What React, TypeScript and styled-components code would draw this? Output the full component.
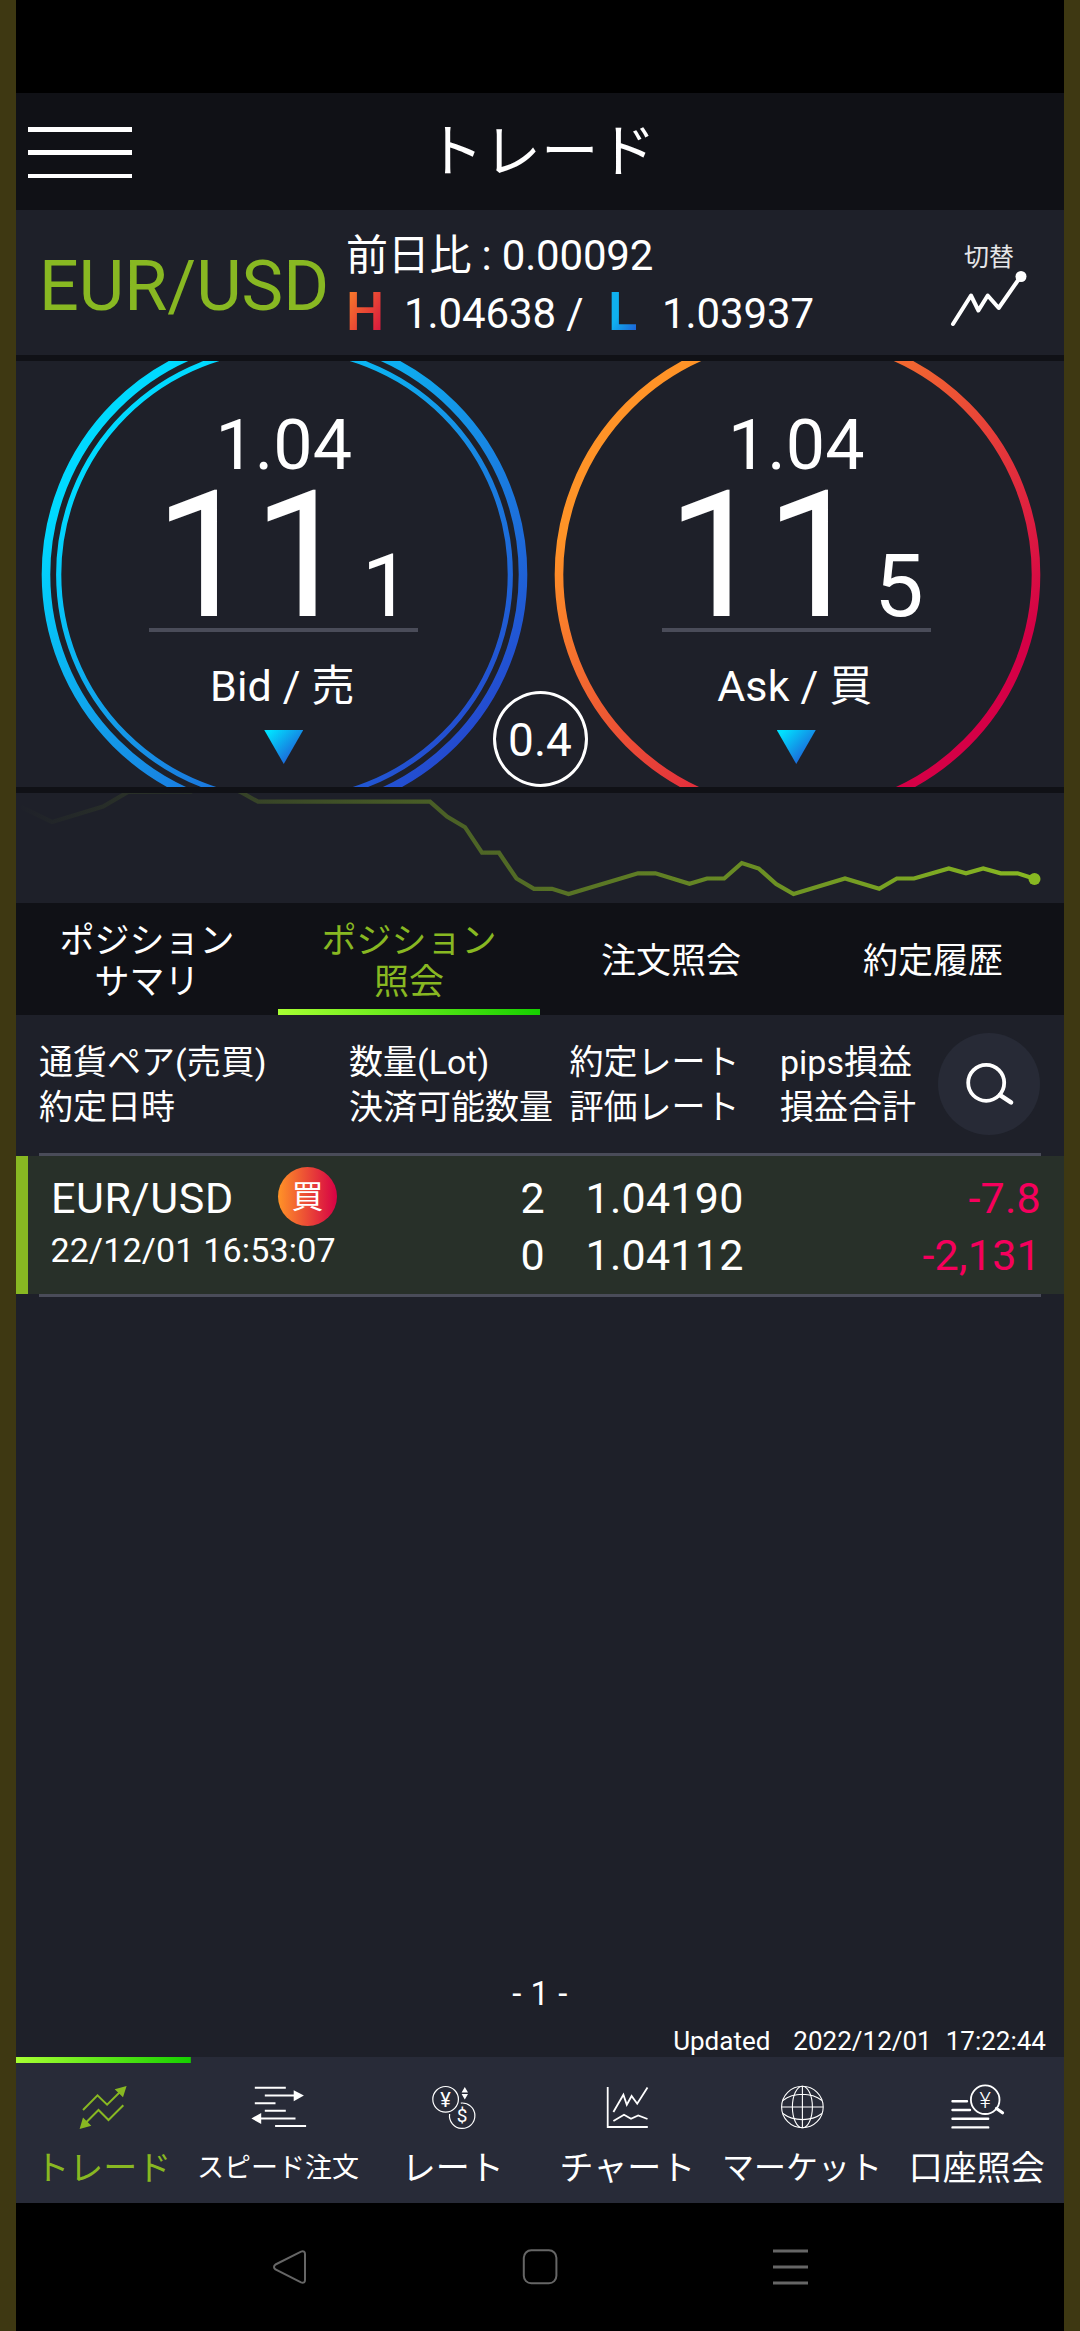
import React from "react";
import styled, { createGlobalStyle } from "styled-components";

const c = {
  frame: "#3e3812",
  dark: "#101116",
  panel: "#1e2029",
  raised: "#282b38",
  green: "#88b822",
  line: "#4a4c59",
  loss: "#f5005c",
};

const Global = createGlobalStyle`
  *, *::before, *::after { box-sizing: border-box; }
  body {
    margin: 0;
    background: #000;
    color: #fff;
    font-family: Roboto, "Noto Sans CJK JP", sans-serif;
    font-size: 34px;
  }
  svg { display: block; }
`;

const Frame = styled.div`
  width: 1080px;
  height: 2331px;
  padding: 0 16px;
  background: ${c.frame};
  overflow: hidden;
`;

const Screen = styled.div`
  height: 100%;
  display: flex;
  flex-direction: column;
  background: ${c.panel};
`;

const StatusBar = styled.div`
  height: 93px;
  flex: none;
  background: #000;
`;

const Header = styled.header`
  flex: none;
  height: 117px;
  display: grid;
  grid-template-columns: 1fr auto 1fr;
  align-items: center;
  padding: 0 12px;
  background: ${c.dark};
`;

const MenuButton = styled.div`
  width: 104px;
  height: 51px;
  display: flex;
  flex-direction: column;
  justify-content: space-between;
  margin-top: 2px;
`;

const MenuLine = styled.span`
  height: 4.5px;
  background: #fff;
`;

const Title = styled.h1`
  margin: 0;
  padding: 3px 0 0 2px;
  font-size: 57.5px;
  font-weight: 400;
  line-height: 80px;
`;

const PairBar = styled.section`
  flex: none;
  height: 145px;
  display: flex;
  padding-left: 23px;
`;

const PairName = styled.div`
  width: 307px;
  padding-top: 3px;
  line-height: 146px;
  font-size: 70px;
  color: ${c.green};
`;

const PairStats = styled.div`
  flex: 1;
  padding-top: 17px;
  font-size: 42px;
  line-height: 57.5px;
`;

const Change = styled.div`
  letter-spacing: -0.2px;
`;

const HighLow = styled.div`
  display: grid;
  grid-template-columns: 58px 204px 54px auto;
  height: 57.5px;
  white-space: pre;
  letter-spacing: -0.1px;
`;

const Mark = styled.span<{ $colors: string }>`
  justify-self: start;
  line-height: 54px;
  font-size: 54px;
  font-weight: 600;
  letter-spacing: -1px;
  color: transparent;
  background: linear-gradient(120deg, ${(p) => p.$colors});
  background-clip: text;
  -webkit-background-clip: text;
`;

const Switch = styled.div`
  width: 118px;
  padding: 33px 0 0 0;
  font-size: 25px;
  line-height: 30px;
  color: #e6e6e8;
`;

const SwitchLabel = styled.div`
  height: 28px;
  padding-left: 18px;
`;

const Separator = styled.div`
  flex: none;
  height: 6px;
  background: ${c.dark};
`;

const Prices = styled.section`
  position: relative;
  flex: none;
  height: 426px;
  display: flex;
  padding: 0 11.5px;
  overflow: hidden;
`;

const PricePanel = styled.div`
  position: relative;
  flex: 1;
  display: flex;
  flex-direction: column;
  align-items: center;
  padding-top: 49px;
`;

const Rings = styled.svg`
  position: absolute;
  left: 13.5px;
  top: -30.5px;
`;

const PriceHead = styled.div`
  font-size: 70px;
  line-height: 70px;
`;

const PriceMain = styled.div`
  height: 130px;
  margin-top: 11px;
  padding-right: 2px;
  display: flex;
  align-items: baseline;
  gap: 10px;
  font-size: 175.5px;
  line-height: 130px;
`;

const PriceSub = styled.span`
  font-size: 88px;
  line-height: 60px;
`;

const PriceRule = styled.div`
  width: 269px;
  height: 4px;
  margin-top: 7px;
  background: ${c.line};
`;

const PriceLabel = styled.div`
  margin-top: 24px;
  padding-right: 3px;
  font-size: 43px;
  line-height: 60px;
  letter-spacing: 0.15px;
`;

const Arrow = styled.div`
  width: 39px;
  height: 34px;
  margin-top: 14px;
  background: linear-gradient(135deg, #00e0ff 10%, #1a6fdc 72%);
  clip-path: polygon(0 0, 100% 0, 50% 100%);
`;

const Spread = styled.div`
  position: absolute;
  left: 476.5px;
  top: 330px;
  width: 95px;
  height: 96px;
  border: 3px solid #fff;
  border-radius: 50%;
  background: ${c.panel};
  text-align: center;
  font-size: 46px;
  line-height: 92px;
`;

const Spark = styled.svg`
  flex: none;
`;

const Tabs = styled.nav`
  flex: none;
  height: 112px;
  display: grid;
  grid-template-columns: repeat(4, 1fr);
  background: ${c.dark};
`;

const Tab = styled.div<{ $active?: boolean }>`
  display: flex;
  flex-direction: column;
  align-items: center;
  justify-content: center;
  padding-top: 5px;
  font-size: 35px;
  line-height: 41px;
  text-align: center;
  color: ${(p) => (p.$active ? c.green : "#fff")};
  ${(p) =>
    p.$active &&
    `background: linear-gradient(90deg, #a8ff33, #16d000) bottom / 100% 6px no-repeat;`}
`;

const ListHead = styled.div`
  flex: none;
  height: 138px;
  display: grid;
  grid-template-columns: 310px 220.5px 210.5px 1fr 102px;
  align-items: center;
  padding: 0 24px 0 23px;
  line-height: 45.5px;
  font-size: 34px;
  white-space: nowrap;
`;

const HeadCell = styled.div`
  padding-top: 2px;
`;

const SearchButton = styled.div`
  width: 102px;
  height: 102px;
  border-radius: 50%;
  background: #272a36;
`;

const Rule = styled.div`
  flex: none;
  height: 3px;
  margin: 0 23px;
  background: ${c.line};
`;

const Row = styled.div`
  flex: none;
  height: 138px;
  display: grid;
  grid-template-columns: 300px 207px 211px 1fr;
  padding: 13.5px 23px 0 22px;
  background: linear-gradient(${c.green}, ${c.green}) left / 12px 100% no-repeat #283029;
  line-height: 57.5px;
  font-size: 43px;
`;

const RowPair = styled.div`
  display: flex;
  align-items: flex-start;
  justify-content: space-between;
  width: 299px;
  height: 57px;
  padding: 0 0 0 13px;
  letter-spacing: 0.65px;
`;

const Side = styled.span`
  width: 59px;
  height: 59px;
  margin-top: -3px;
  border-radius: 50%;
  background: linear-gradient(90deg, #ff9327, #d60045);
  text-align: center;
  font-size: 32px;
  line-height: 60px;
  letter-spacing: 0;
`;

const RowTime = styled.div`
  padding-left: 12.5px;
  font-size: 34px;
  line-height: 47px;
  letter-spacing: 0.18px;
  white-space: nowrap;
`;

const RowCell = styled.div<{ $align?: string; $loss?: boolean; $inset?: number }>`
  text-align: ${(p) => p.$align || "left"};
  padding-left: ${(p) => p.$inset || 0}px;
  color: ${(p) => (p.$loss ? c.loss : "#fff")};
  letter-spacing: 0.25px;
`;

const Empty = styled.div`
  flex: 1;
`;

const Page = styled.div`
  flex: none;
  height: 45px;
  line-height: 46px;
  font-size: 33px;
  text-align: center;
  letter-spacing: 0.5px;
`;

const Updated = styled.div`
  flex: none;
  height: 41px;
  padding: 9px 18px 0 0;
  display: flex;
  justify-content: flex-end;
  font-size: 26px;
  line-height: 32px;
  white-space: pre;
`;

const Stamp = styled.span<{ $gap?: number }>`
  margin-left: ${(p) => p.$gap || 0}px;
`;

const BottomNav = styled.nav`
  flex: none;
  height: 146px;
  display: grid;
  grid-template-columns: repeat(6, 1fr);
  background: ${c.raised};
`;

const NavItem = styled.div<{ $active?: boolean }>`
  display: flex;
  flex-direction: column;
  align-items: center;
  padding-top: 23px;
  color: ${(p) => (p.$active ? c.green : "#fff")};
  ${(p) =>
    p.$active &&
    `background: linear-gradient(90deg, #a8ff33, #16d000) top / 100% 6px no-repeat;`}
`;

const NavLabel = styled.div<{ $size?: number }>`
  margin-top: 9px;
  font-size: ${(p) => p.$size || 34}px;
  line-height: 50px;
  white-space: nowrap;
`;

const SystemBar = styled.div`
  flex: none;
  height: 128px;
  display: flex;
  justify-content: space-between;
  align-items: center;
  padding: 0 256px;
  background: #000;
`;

type PriceProps = { head: string; main: string; sub: string; label: string; kind: "bid" | "ask" };

function PriceCircle({ head, main, sub, label, kind }: PriceProps) {
  const id = "ring-" + kind;
  return (
    <PricePanel>
      <Rings width="487" height="487" viewBox="0 0 487 487">
        <defs>
          <linearGradient id={id} gradientUnits="userSpaceOnUse" x1="0" y1="0" x2="487" y2="487">
            {kind === "bid" ? (
              <>
                <stop offset="0.2" stopColor="#00d9ff" />
                <stop offset="0.5" stopColor="#1497e8" />
                <stop offset="0.86" stopColor="#2449cf" />
              </>
            ) : (
              <>
                <stop offset="0.22" stopColor="#ff9327" />
                <stop offset="0.8" stopColor="#d50046" />
              </>
            )}
          </linearGradient>
        </defs>
        <g fill="none" stroke={`url(#${id})`}>
          <circle cx="243.5" cy="243.5" r="238.5" strokeWidth="8.6" />
          {kind === "bid" && <circle cx="243.5" cy="243.5" r="225.8" strokeWidth="5.2" />}
        </g>
      </Rings>
      <PriceHead>{head}</PriceHead>
      <PriceMain>
        <span>{main}</span>
        <PriceSub>{sub}</PriceSub>
      </PriceMain>
      <PriceRule />
      <PriceLabel>{label}</PriceLabel>
      <Arrow />
    </PricePanel>
  );
}

const trend: [number, number][] = [
  [5, 14], [36, 29], [87, 13.5], [112, -1], [156, -1.5], [175, -1.5], [200, -12], [225, -0.8],
  [242, 8.7], [414, 8.7], [431, 23.5], [449, 34.2], [466, 59.7], [483, 59.7], [500.5, 85.5],
  [518, 95.8], [536, 95.8], [552.6, 101], [622, 80.3], [639.4, 80.3], [673.5, 90.7], [691, 85.5],
  [708.2, 85.5], [725.8, 70], [742.7, 75.5], [760.2, 91], [777.5, 101], [829, 85.5], [863.2, 95.8],
  [880.8, 85.5], [898, 85.5], [932.8, 75.5], [950, 80.3], [967.2, 75.5], [984.8, 80.3],
  [1001.6, 80.3], [1018.5, 85.8],
];

function TrendLine() {
  return (
    <Spark width="1048" height="110" viewBox="0 0 1048 110">
      <defs>
        <linearGradient id="fade" gradientUnits="userSpaceOnUse" x1="0" y1="0" x2="1020" y2="0">
          <stop offset="0" stopColor={c.green} stopOpacity="0" />
          <stop offset="1" stopColor={c.green} stopOpacity="1" />
        </linearGradient>
      </defs>
      <polyline
        points={trend.map((p) => p.join(",")).join(" ")}
        fill="none"
        stroke="url(#fade)"
        strokeWidth="4.2"
      />
      <circle cx="1018.5" cy="86" r="6" fill={c.green} />
    </Spark>
  );
}

const icons = {
  trade: (
    <>
      <path
        d="M10 30L24.5 15.3 34.1 24.7 49 10M50.3 25.3L35.5 40 25.5 30 12 43.5"
        fill="none"
        stroke="currentColor"
        strokeWidth="2"
      />
      <path d="M53.6 6L41.7 9.3 50 17.3ZM6.6 49L10 37.5 18.3 45.7Z" fill="currentColor" />
    </>
  ),
  speed: (
    <>
      <path
        d="M6.8 7.7H37.8M16.8 15.5H47M6.8 23.3H27.5M16.8 30.8H37.8M12 38.5H47.5M27.1 46H58.1"
        stroke="currentColor"
        strokeWidth="2"
      />
      <path d="M45.7 10.2L55.9 15.6 45.7 21.2ZM13.2 33L3.4 38.4 13.2 44Z" fill="currentColor" />
    </>
  ),
  rate: (
    <>
      <g fill="none" stroke="currentColor" strokeWidth="1.2">
        <circle cx="22.6" cy="19.3" r="12.8" />
        <path d="M37.8 23.1A12.7 12.7 0 1 1 26.6 34" />
      </g>
      <g fill="currentColor" fontSize="20" textAnchor="middle" fontFamily="Roboto, sans-serif">
        <text x="22.6" y="27">¥</text>
        <text x="39.1" y="42.3" fontSize="19">$</text>
      </g>
      <path d="M41.8 7L45 12.6H38.6ZM41.8 19.6L38.6 14H45Z" fill="currentColor" />
    </>
  ),
  chart: (
    <path
      d="M10.7 7V47H50.8M16.4 32L26.4 14.7 29.8 24.7 34.6 16 40.2 23.7 50.5 7.5M16.4 41L27 34.7 34 38.8 41.2 35.4 50.5 39"
      fill="none"
      stroke="currentColor"
      strokeWidth="1.8"
    />
  ),
  market: (
    <g fill="none" stroke="currentColor" strokeWidth="1.1">
      <circle cx="30.4" cy="27" r="20.8" />
      <ellipse cx="30.4" cy="27" rx="10" ry="20.8" />
      <path d="M30.4 6.2V47.8M9.6 27H51.2M10.8 20.5Q19 14.3 30.4 14.3T50 20.5M10.8 33.5Q19 39.6 30.4 39.6T50 33.5" />
    </g>
  ),
  account: (
    <>
      <g fill="none" stroke="currentColor" strokeLinecap="round">
        <circle cx="38.2" cy="19.7" r="14.3" strokeWidth="1.8" />
        <path d="M49.5 28.5L55.5 32.8" strokeWidth="3.2" />
        <path d="M5.5 21.3H20M5.5 30H23M5.5 38.7H41.2M5.5 47.4H41.2" strokeWidth="2.4" />
      </g>
      <text
        x="38.2"
        y="28"
        fontSize="22"
        fontWeight="300"
        textAnchor="middle"
        fill="currentColor"
        fontFamily="Roboto, sans-serif"
      >
        ¥
      </text>
    </>
  ),
};

const navItems: { icon: keyof typeof icons; label: string; size?: number; active?: boolean }[] = [
  { icon: "trade", label: "トレード", active: true },
  { icon: "speed", label: "スピード注文", size: 27 },
  { icon: "rate", label: "レート" },
  { icon: "chart", label: "チャート" },
  { icon: "market", label: "マーケット", size: 32 },
  { icon: "account", label: "口座照会" },
];

const tabs = [["ポジション", "サマリ"], ["ポジション", "照会"], ["注文照会"], ["約定履歴"]];

const heads = [
  ["通貨ペア(売買)", "約定日時"],
  ["数量(Lot)", "決済可能数量"],
  ["約定レート", "評価レート"],
  ["pips損益", "損益合計"],
];

export default function App() {
  return (
    <Frame>
      <Global />
      <Screen>
        <StatusBar />
        <Header>
          <MenuButton>
            <MenuLine />
            <MenuLine />
            <MenuLine />
          </MenuButton>
          <Title>トレード</Title>
        </Header>

        <PairBar>
          <PairName>EUR/USD</PairName>
          <PairStats>
            <Change>前日比 : 0.00092</Change>
            <HighLow>
              <Mark $colors="#f97a2a 10%, #d8143f 90%">H</Mark>
              <span>1.04638 /</span>
              <Mark $colors="#0fb0ee 45%, #1d62d8 90%">L</Mark>
              <span>1.03937</span>
            </HighLow>
          </PairStats>
          <Switch>
            <SwitchLabel>切替</SwitchLabel>
            <svg width="84" height="60" viewBox="0 0 84 60">
              <path
                d="M7 53L25 24.5 32.4 39.5 41.7 24.5 52.7 37 75 5"
                fill="none"
                stroke="#fff"
                strokeWidth="4"
                strokeLinecap="round"
                strokeLinejoin="round"
              />
              <circle cx="75" cy="5.5" r="5.5" fill="#fff" />
            </svg>
          </Switch>
        </PairBar>
        <Separator />

        <Prices>
          <PriceCircle kind="bid" head="1.04" main="11" sub="1" label="Bid / 売" />
          <PriceCircle kind="ask" head="1.04" main="11" sub="5" label="Ask / 買" />
          <Spread>0.4</Spread>
        </Prices>
        <Separator />
        <TrendLine />

        <Tabs>
          {tabs.map((lines, i) => (
            <Tab key={i} $active={i === 1}>
              {lines.map((l) => (
                <span key={l}>{l}</span>
              ))}
            </Tab>
          ))}
        </Tabs>

        <ListHead>
          {heads.map(([a, b]) => (
            <HeadCell key={a}>
              <div>{a}</div>
              <div>{b}</div>
            </HeadCell>
          ))}
          <SearchButton>
            <svg width="102" height="102" viewBox="0 0 102 102">
              <g fill="none" stroke="#fff" strokeLinecap="round">
                <circle cx="48.2" cy="49.8" r="18" strokeWidth="3.8" />
                <path d="M62 62.2L73 69.4" strokeWidth="4.6" />
              </g>
            </svg>
          </SearchButton>
        </ListHead>
        <Rule />
        <Row>
          <div>
            <RowPair>
              <span>EUR/USD</span>
              <Side>買</Side>
            </RowPair>
            <RowTime>22/12/01 16:53:07</RowTime>
          </div>
          <RowCell $align="right">
            <div>2</div>
            <div>0</div>
          </RowCell>
          <RowCell $inset={40.5}>
            <div>1.04190</div>
            <div>1.04112</div>
          </RowCell>
          <RowCell $align="right" $loss>
            <div>-7.8</div>
            <div>-2,131</div>
          </RowCell>
        </Row>
        <Rule />

        <Empty />
        <Page>- 1 -</Page>
        <Updated>
          <Stamp>Updated</Stamp>
          <Stamp $gap={23}>2022/12/01</Stamp>
          <Stamp $gap={14}>17:22:44</Stamp>
        </Updated>

        <BottomNav>
          {navItems.map((n) => (
            <NavItem key={n.icon} $active={n.active}>
              <svg width="60" height="54" viewBox="0 0 60 54">
                {icons[n.icon]}
              </svg>
              <NavLabel $size={n.size}>{n.label}</NavLabel>
            </NavItem>
          ))}
        </BottomNav>

        <SystemBar>
          <svg width="36" height="36" viewBox="0 0 36 36">
            <path
              d="M3.5 15.5L29 2.6Q33 1.5 33 5V31Q33 34.5 29 33.4L3.5 20.5Q0.5 18 3.5 15.5Z"
              fill="none"
              stroke="#666"
              strokeWidth="2"
            />
          </svg>
          <svg width="36" height="36" viewBox="0 0 36 36">
            <rect x="1.8" y="1.3" width="32.6" height="33" rx="7.5" fill="none" stroke="#666" strokeWidth="2" />
          </svg>
          <svg width="36" height="36" viewBox="0 0 36 36">
            <path d="M1 2H36M1 18H36M1 34H36" stroke="#666" strokeWidth="3" />
          </svg>
        </SystemBar>
      </Screen>
    </Frame>
  );
}
